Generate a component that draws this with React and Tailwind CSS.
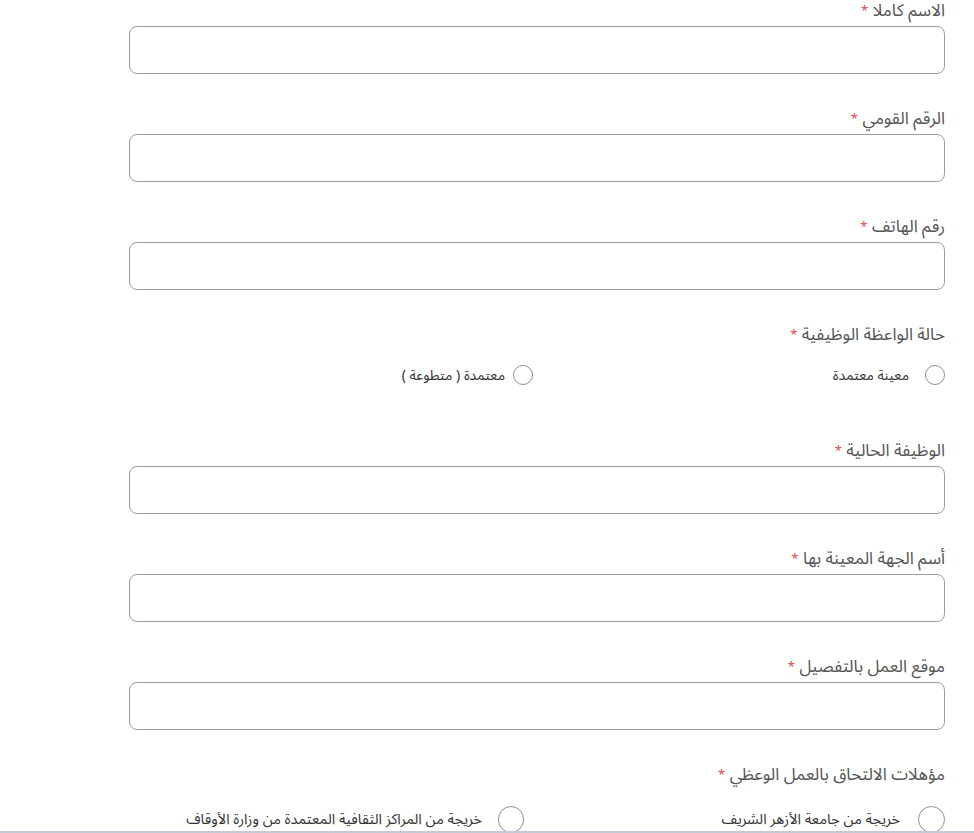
import React from "react";

const fields1 = ["الاسم كاملا", "الرقم القومي", "رقم الهاتف"];
const fields2 = ["الوظيفة الحالية", "أسم الجهة المعينة بها", "موقع العمل بالتفصيل"];

function Label({ children }) {
  return (
    <label className="block h-[22px] leading-[22px] text-[17px] text-[#555] mb-[4px]">
      {children} <span className="text-[#e0474c] text-[13px] align-top">*</span>
    </label>
  );
}

function TextField({ label }) {
  return (
    <div className="mb-[34px]">
      <Label>{label}</Label>
      <input
        type="text"
        className="block w-full h-[48px] rounded-[8px] border border-[#9c9c9c] bg-white px-3 outline-none"
      />
    </div>
  );
}

function Radio({ text, size = "w-[20px] h-[20px]", gap = "gap-[16px]", textSize = "text-[14px]" }) {
  return (
    <label className={`flex items-center ${gap} ${textSize} text-[#333]`}>
      <span className={`${size} shrink-0 rounded-full border border-[#8f8f8f] bg-white`} />
      <span>{text}</span>
    </label>
  );
}

export default function App() {
  return (
    <div
      dir="rtl"
      className="h-[833px] w-full flex flex-col overflow-hidden bg-white"
      style={{ fontFamily: '"Noto Sans Arabic", "DejaVu Sans", sans-serif' }}
    >
      <div className="flex-1 min-h-0 overflow-hidden">
        <form className="w-[816px] mr-[29px]">
          {fields1.map((f) => (
            <TextField key={f} label={f} />
          ))}

          <div className="mb-[40px]">
            <Label>حالة الواعظة الوظيفية</Label>
            <div className="grid grid-cols-[412px_1fr] h-[50px] items-center">
              <Radio text="معينة معتمدة" />
              <Radio text="معتمدة ( متطوعة )" gap="gap-[8px]" />
            </div>
          </div>

          {fields2.map((f) => (
            <TextField key={f} label={f} />
          ))}

          <div>
            <Label>مؤهلات الالتحاق بالعمل الوعظي</Label>
            <div className="flex pt-[16px] items-center">
              <div className="w-[421px]">
                <Radio
                  text="خريجة من جامعة الأزهر الشريف"
                  size="w-[27px] h-[27px]"
                  gap="gap-[18px]"
                  textSize="text-[14.5px]"
                />
              </div>
              <Radio
                text="خريجة من المراكز الثقافية المعتمدة من وزارة الأوقاف"
                size="w-[26px] h-[27px]"
                gap="gap-[16px]"
                textSize="text-[14.5px]"
              />
            </div>
          </div>
        </form>
      </div>
      <div className="h-[2px] bg-[#c3cad5]" />
    </div>
  );
}
